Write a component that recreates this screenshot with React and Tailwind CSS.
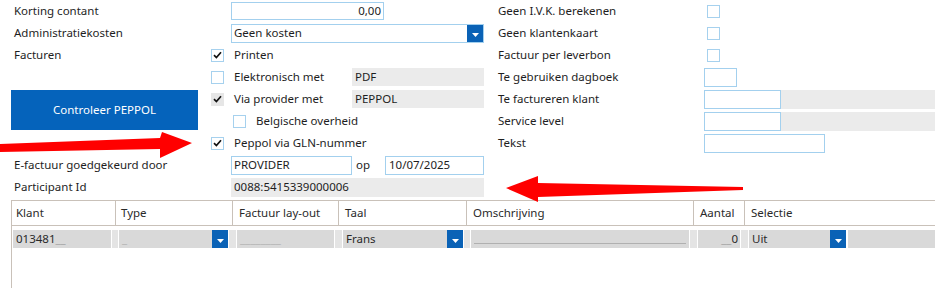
import React from 'react';

// --- small building blocks ---
const Tick = () => (
  <svg width="9" height="8" viewBox="0 0 9 8">
    <path d="M1 4.2 L3.4 6.6 L8 1.2" fill="none" stroke="#111" strokeWidth="1.7" />
  </svg>
);

const Box = ({ checked, disabled }) => (
  <span
    className={`flex h-[13px] w-[13px] shrink-0 items-center justify-center ${
      disabled ? 'bg-[#e6e6e6]' : 'border border-[#a6d1ee] bg-white'
    }`}
  >
    {checked && <Tick />}
  </span>
);

const DropBtn = ({ className = '' }) => (
  <span className={`flex h-full w-[16px] shrink-0 items-center justify-center bg-[#0a62b6] ${className}`}>
    <svg width="7" height="4" viewBox="0 0 7 4" className="mt-[3px]">
      <path d="M0 0 H7 L3.5 4 Z" fill="#fff" />
    </svg>
  </span>
);

const Label = ({ children, className = '' }) => (
  <div className={`flex items-center whitespace-nowrap ${className}`}>{children}</div>
);

const Cell = ({ children, className = '' }) => (
  <div className={`flex items-center ${className}`}>{children}</div>
);

const Strip = ({ w }) => <div className={`h-full ${w} border-x border-white bg-[#e4e4e4]`} />;

const columns = [
  { title: 'Klant', w: 'w-[104px] pl-[4px]' },
  { title: 'Type', w: 'w-[117px] pl-[5px]' },
  { title: 'Factuur lay-out', w: 'w-[106px] pl-[6px]' },
  { title: 'Taal', w: 'w-[128px] pl-[6px]' },
  { title: 'Omschrijving', w: 'w-[227px] pl-[6px]' },
  { title: 'Aantal', w: 'w-[51px] pl-[6px]' },
];

export default function App() {
  return (
    <div className="relative h-[288px] w-[935px] overflow-hidden bg-white font-['Noto_Sans',sans-serif] text-[11.5px] text-[#1e1e1e]">
      {/* Form */}
      <div className="grid auto-rows-[22px] grid-cols-[200px_287px_206px_1fr] pl-[11px]">
        {/* row 0 */}
        <Label className="pl-[3px]">Korting contant</Label>
        <Cell>
          <div className="ml-[20px] flex h-[18px] w-[153px] items-center justify-end border border-[#a3d0ee] pr-[2px]">0,00</div>
        </Cell>
        <Label>Geen I.V.K. berekenen</Label>
        <Cell className="pl-[3px]"><Box /></Cell>

        {/* row 1 */}
        <Label className="pl-[3px]">Administratiekosten</Label>
        <Cell>
          <div className="ml-[20px] flex h-[19px] w-[253px] items-center border border-[#a3d0ee]">
            <span className="flex-1 pl-[2px]">Geen kosten</span>
            <DropBtn />
          </div>
        </Cell>
        <Label>Geen klantenkaart</Label>
        <Cell className="pl-[3px]"><Box /></Cell>

        {/* row 2 */}
        <Label className="pl-[3px]">Facturen</Label>
        <Cell>
          <Box checked />
          <span className="ml-[10px]">Printen</span>
        </Cell>
        <Label>Factuur per leverbon</Label>
        <Cell className="pl-[3px]"><Box /></Cell>

        {/* row 3 */}
        <div />
        <Cell>
          <Box />
          <span className="ml-[10px] w-[118px]">Elektronisch met</span>
          <span className="flex h-[18px] w-[132px] items-center bg-[#ebebeb] pl-[3px]">PDF</span>
        </Cell>
        <Label>Te gebruiken dagboek</Label>
        <Cell>
          <div className="h-[19px] w-[33px] border border-[#a3d0ee]" />
        </Cell>

        {/* row 4 */}
        <div className="row-span-2 flex items-center">
          <button className="flex h-[40px] w-[187px] items-center justify-center bg-[#0563bb] text-white">
            Controleer PEPPOL
          </button>
        </div>
        <Cell>
          <Box checked disabled />
          <span className="ml-[10px] w-[118px]">Via provider met</span>
          <span className="flex h-[18px] w-[132px] items-center bg-[#ebebeb] pl-[3px]">PEPPOL</span>
        </Cell>
        <Label>Te factureren klant</Label>
        <Cell>
          <div className="h-[19px] w-[77px] border border-[#a3d0ee]" />
          <div className="h-[19px] flex-1 bg-[#ebebeb]" />
        </Cell>

        {/* row 5 */}
        <Cell>
          <span className="ml-[22px]"><Box /></span>
          <span className="ml-[10px]">Belgische overheid</span>
        </Cell>
        <Label>Service level</Label>
        <Cell>
          <div className="h-[19px] w-[77px] border border-[#a3d0ee]" />
          <div className="h-[19px] flex-1 bg-[#ebebeb]" />
        </Cell>

        {/* row 6 */}
        <div />
        <Cell>
          <Box checked />
          <span className="ml-[10px]">Peppol via GLN-nummer</span>
        </Cell>
        <Label>Tekst</Label>
        <Cell>
          <div className="h-[19px] w-[121px] border border-[#a3d0ee]" />
        </Cell>

        {/* row 7 */}
        <Label className="pl-[3px]">E-factuur goedgekeurd door</Label>
        <Cell>
          <div className="ml-[20px] flex h-[19px] w-[121px] items-center border border-[#a3d0ee] pl-[2px]">PROVIDER</div>
          <span className="ml-[4px] w-[29px]">op</span>
          <div className="flex h-[19px] w-[99px] items-center border border-[#a3d0ee] pl-[3px]">10/07/2025</div>
        </Cell>
        <div />
        <div />

        {/* row 8 */}
        <Label className="pl-[3px]">Participant Id</Label>
        <Cell>
          <div className="ml-[20px] flex h-[19px] w-[253px] items-center bg-[#ebebeb] pl-[3px]">0088:5415339000006</div>
        </Cell>
        <div />
        <div />
      </div>

      {/* Grid */}
      <div className="ml-[11px] mt-[2px] h-[88px] border-l border-t border-[#c9c1b9]">
        <div className="flex h-[25px] border-b border-[#c9c1b9] text-[#2a2a2a]">
          {columns.map((c) => (
            <div key={c.title} className={`flex items-center border-r border-[#c9c1b9] ${c.w}`}>
              {c.title}
            </div>
          ))}
          <div className="flex flex-1 items-center pl-[6px]">Selectie</div>
        </div>

        <div className="mt-[4px] flex h-[18px] text-[#2a2a2a]">
          <div className="w-[1px]" />
          <div className="flex w-[98px] items-center bg-[#d9d9d9] pl-[3px]">
            013481<span className="text-[#a3a3a3]">__</span>
          </div>
          <Strip w="w-[8px]" />
          <div className="flex w-[93px] items-center bg-[#d9d9d9] pl-[3px] text-[#b3b3b3]">_</div>
          <DropBtn />
          <Strip w="w-[9px]" />
          <div className="flex w-[97px] items-center overflow-hidden bg-[#d9d9d9] pl-[3px] text-[#b3b3b3]">________</div>
          <Strip w="w-[9px]" />
          <div className="flex w-[104px] items-center bg-[#d9d9d9] pl-[3px]">Frans</div>
          <DropBtn />
          <Strip w="w-[8px]" />
          <div className="flex w-[218px] items-center bg-[#d9d9d9] px-[3px]">
            <div className="mt-[9px] h-[1px] w-full bg-[#b0b0b0]" />
          </div>
          <Strip w="w-[9px]" />
          <div className="flex w-[42px] items-center justify-end bg-[#d9d9d9] pr-[2px]">
            <span className="text-[#a3a3a3]">__</span>0
          </div>
          <Strip w="w-[9px]" />
          <div className="flex w-[81px] items-center bg-[#d9d9d9] pl-[3px]">Uit</div>
          <DropBtn />
          <div className="w-[2px]" />
          <div className="flex-1 bg-[#d9d9d9]" />
        </div>
      </div>

      {/* Annotation arrows */}
      <svg className="pointer-events-none absolute left-0 top-0" width="935" height="288">
        <polygon points="0,144 160,138 162,132 192,143 160,158 160,149 0,152" fill="#ff0000" />
        <polygon points="506,188 538,176 538,183 743,187 743,190 538,197 538,202" fill="#ff0000" />
      </svg>
    </div>
  );
}
